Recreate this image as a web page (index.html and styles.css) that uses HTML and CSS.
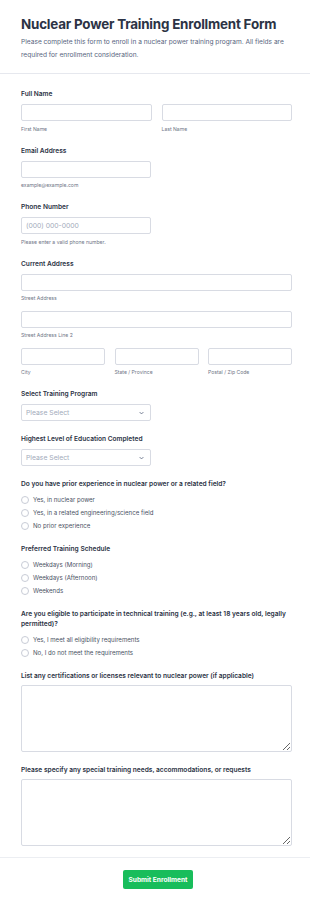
FILE: index.html
```html
<!DOCTYPE html>
<html lang="en">
<head>
<meta charset="utf-8">
<title>Nuclear Power Training Enrollment Form</title>
<link rel="stylesheet" href="styles.css">
</head>
<body>
<header class="head">
  <h1 class="title">Nuclear Power Training Enrollment Form</h1>
  <p class="intro">Please complete this form to enroll in a nuclear power training program. All fields are required for enrollment consideration.</p>
</header>
<form class="form">
  <div class="field">
    <div class="label">Full Name</div>
    <div class="row two">
      <div class="col"><input class="input" type="text"><div class="sub">First Name</div></div>
      <div class="col"><input class="input" type="text"><div class="sub">Last Name</div></div>
    </div>
  </div>
  <div class="field">
    <div class="label">Email Address</div>
    <div class="half"><input class="input" type="email"><div class="sub">example@example.com</div></div>
  </div>
  <div class="field">
    <div class="label">Phone Number</div>
    <div class="half"><input class="input" type="tel" placeholder="(000) 000-0000"><div class="sub">Please enter a valid phone number.</div></div>
  </div>
  <div class="field">
    <div class="label">Current Address</div>
    <div class="col"><input class="input" type="text"><div class="sub">Street Address</div></div>
    <div class="col gapped"><input class="input" type="text"><div class="sub">Street Address Line 2</div></div>
    <div class="row three gapped">
      <div class="col"><input class="input" type="text"><div class="sub">City</div></div>
      <div class="col"><input class="input" type="text"><div class="sub">State / Province</div></div>
      <div class="col"><input class="input" type="text"><div class="sub">Postal / Zip Code</div></div>
    </div>
  </div>
  <div class="field">
    <div class="label">Select Training Program</div>
    <div class="select half"><span>Please Select</span><svg class="chev" viewBox="0 0 8 5" width="5" height="4"><path d="M1 1l3 3 3-3" fill="none" stroke="#57647e" stroke-width="1.3"/></svg></div>
  </div>
  <div class="field">
    <div class="label">Highest Level of Education Completed</div>
    <div class="select half"><span>Please Select</span><svg class="chev" viewBox="0 0 8 5" width="5" height="4"><path d="M1 1l3 3 3-3" fill="none" stroke="#57647e" stroke-width="1.3"/></svg></div>
  </div>
  <div class="field">
    <div class="label">Do you have prior experience in nuclear power or a related field?</div>
    <div class="radios">
      <div class="radio"><span class="dot"></span>Yes, in nuclear power</div>
      <div class="radio"><span class="dot"></span>Yes, in a related engineering/science field</div>
      <div class="radio"><span class="dot"></span>No prior experience</div>
    </div>
  </div>
  <div class="field">
    <div class="label">Preferred Training Schedule</div>
    <div class="radios">
      <div class="radio"><span class="dot"></span>Weekdays (Morning)</div>
      <div class="radio"><span class="dot"></span>Weekdays (Afternoon)</div>
      <div class="radio"><span class="dot"></span>Weekends</div>
    </div>
  </div>
  <div class="field">
    <div class="label">Are you eligible to participate in technical training (e.g., at least 18 years old, legally permitted)?</div>
    <div class="radios">
      <div class="radio"><span class="dot"></span>Yes, I meet all eligibility requirements</div>
      <div class="radio"><span class="dot"></span>No, I do not meet the requirements</div>
    </div>
  </div>
  <div class="field">
    <div class="label">List any certifications or licenses relevant to nuclear power (if applicable)</div>
    <textarea class="area"></textarea>
  </div>
  <div class="field last">
    <div class="label">Please specify any special training needs, accommodations, or requests</div>
    <textarea class="area"></textarea>
  </div>
</form>
<footer class="foot">
  <button class="submit" type="button">Submit Enrollment</button>
</footer>
</body>
</html>
```
FILE: styles.css
```css
* { box-sizing: border-box; }
html, body { margin: 0; padding: 0; background: #fff; }
body {
  font-family: Inter, "Noto Sans", sans-serif;
  color: #2c3345;
  width: 310px;
}
.head {
  padding: 16px 12px 11px 21px;
  border-bottom: 1px solid #e6e8ee;
}
.title {
  margin: 0;
  font-size: 13.4px;
  line-height: 17px;
  font-weight: 700;
  letter-spacing: -0.2px;
  color: #2c3345;
  white-space: nowrap;
}
.intro {
  margin: 3px 0 0;
  font-size: 6.6px;
  line-height: 13px;
  color: #57647e;
}
.form {
  padding: 15px 18px 11px 21px;
  display: flex;
  flex-direction: column;
  gap: 13px;
}
.field { display: flex; flex-direction: column; }
.label {
  font-size: 6.6px;
  line-height: 10px;
  font-weight: 600;
  color: #2c3345;
  margin-bottom: 5px;
}
.row { display: grid; }
.row.two { grid-template-columns: 1fr 1fr; column-gap: 10px; }
.row.three { grid-template-columns: 1fr 1fr 1fr; column-gap: 9.5px; }
.col { display: flex; flex-direction: column; }
.gapped { margin-top: 8.5px; }
.half { width: 130px; }
.input {
  display: block;
  width: 100%;
  height: 17px;
  margin: 0;
  padding: 0 4px;
  border: 1px solid #d8dbe3;
  border-radius: 2px;
  background: #fff;
  font-family: inherit;
  font-size: 6.8px;
  color: #2c3345;
  outline: none;
}
.input::placeholder { color: #a3abbb; }
.sub {
  margin-top: 3.5px;
  font-size: 5.1px;
  line-height: 8px;
  color: #6f7687;
}
.select {
  height: 17px;
  border: 1px solid #d8dbe3;
  border-radius: 2px;
  display: flex;
  align-items: center;
  justify-content: space-between;
  padding: 0 6px 0 4px;
  font-size: 6.8px;
  color: #a3abbb;
}
.chev { display: block; }
.radios { display: flex; flex-direction: column; margin-top: -1px; margin-bottom: -1px; }
.radio {
  height: 13px;
  display: flex;
  align-items: center;
  gap: 4px;
  font-size: 6.1px;
  color: #4a5264;
}
.dot {
  width: 8px;
  height: 8px;
  border: 1px solid #c8ccd6;
  border-radius: 50%;
  background: #fff;
  flex: none;
}
.area {
  display: block;
  width: 100%;
  height: 67px;
  margin: -1px 0 0;
  border: 1px solid #d8dbe3;
  border-radius: 2px;
  background: #fff;
  font-family: inherit;
  outline: none;
  resize: vertical;
}
.foot {
  border-top: 1px solid #eceef2;
  padding: 12px 0 17px 6px;
  display: flex;
  justify-content: center;
}
.submit {
  width: 70px;
  height: 19px;
  border: none;
  border-radius: 2px;
  background: #18bd5b;
  color: #fff;
  font-family: inherit;
  font-size: 6.6px;
  font-weight: 700;
  padding: 0;
}
```
